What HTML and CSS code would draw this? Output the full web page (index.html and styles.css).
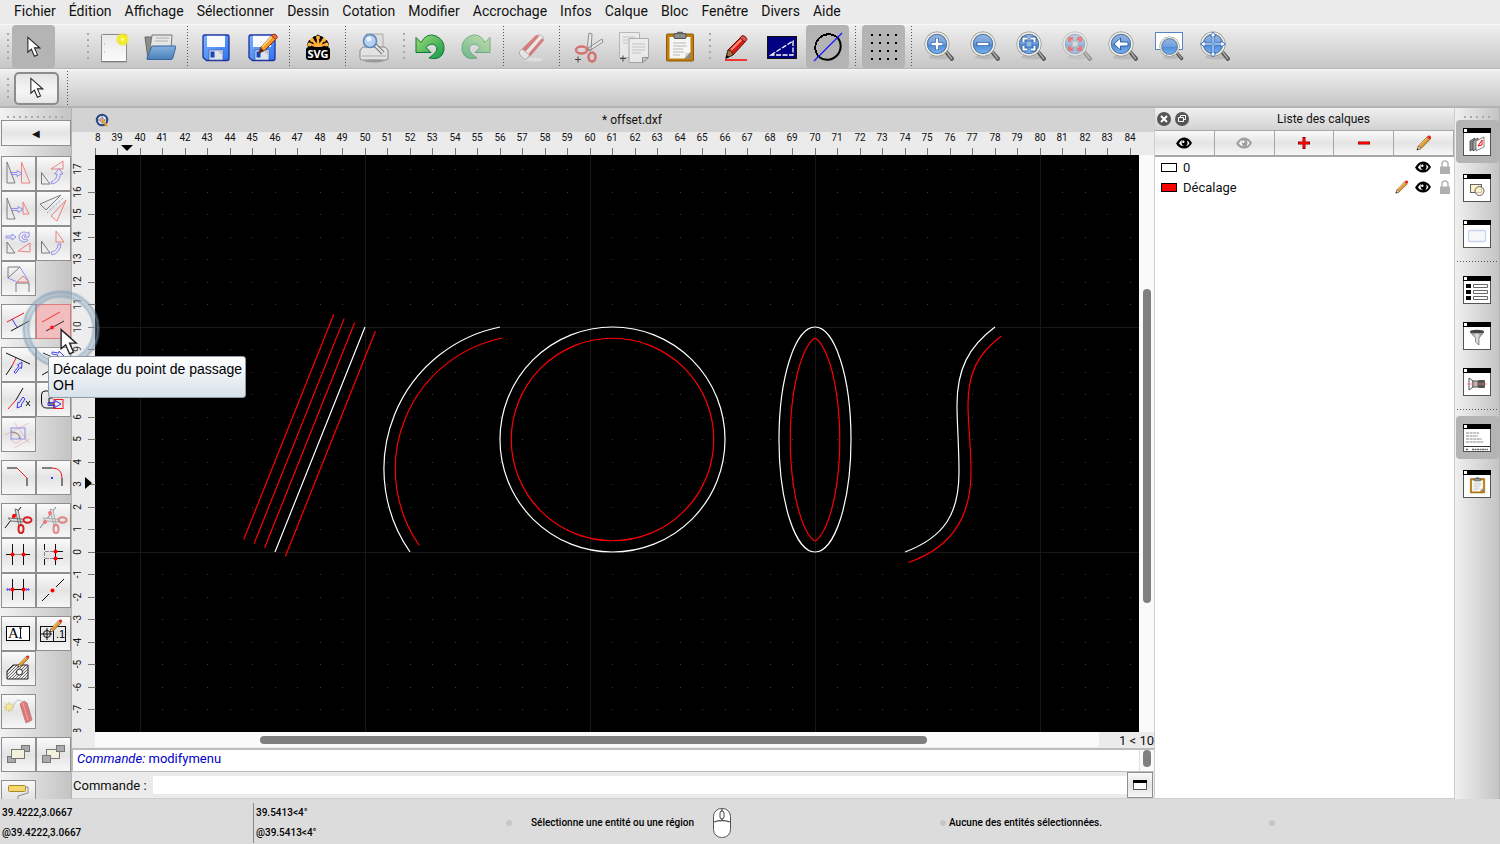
FILE: index.html
```html
<!DOCTYPE html>
<html lang="fr">
<head>
<meta charset="utf-8">
<title>offset.dxf</title>
<link rel="stylesheet" href="styles.css">
</head>
<body>
<svg class="sprite" aria-hidden="true">
  <defs>
    <linearGradient id="lens" x1="0" y1="0" x2="0" y2="1"><stop offset="0" stop-color="#9db9e0"/><stop offset=".5" stop-color="#6f9fdc"/><stop offset=".52" stop-color="#4c8bd8"/><stop offset="1" stop-color="#7db6f0"/></linearGradient>
    <linearGradient id="folder" x1="0" y1="0" x2="0" y2="1"><stop offset="0" stop-color="#86b2de"/><stop offset="1" stop-color="#4a80b8"/></linearGradient>
    <linearGradient id="paper" x1="0" y1="0" x2="0" y2="1"><stop offset="0" stop-color="#e9e9e9"/><stop offset="1" stop-color="#fbfbfb"/></linearGradient>
    <linearGradient id="green" x1="0" y1="0" x2="1" y2="1"><stop offset="0" stop-color="#a5dc78"/><stop offset="1" stop-color="#0f9a48"/></linearGradient>
    <linearGradient id="blue" x1="0" y1="0" x2="1" y2="1"><stop offset="0" stop-color="#7db4ff"/><stop offset="1" stop-color="#2b74f0"/></linearGradient>
    <radialGradient id="glow"><stop offset="0" stop-color="#fffbd0"/><stop offset=".35" stop-color="#f6ee20"/><stop offset=".7" stop-color="#efe63a"/><stop offset="1" stop-color="#efe63a" stop-opacity="0"/></radialGradient>
    <linearGradient id="metal" x1="0" y1="0" x2="1" y2="0"><stop offset="0" stop-color="#777"/><stop offset=".5" stop-color="#e4e4e4"/><stop offset="1" stop-color="#666"/></linearGradient>
    <pattern id="hatch" width="3" height="3" patternUnits="userSpaceOnUse"><path d="M-1 4 4-1M-1 1 1-1M2 4 4 2" stroke="#555" stroke-width=".8"/></pattern>
  </defs>
  <symbol id="lens-base" viewBox="0 0 32 32">
    <ellipse cx="16" cy="26" rx="11" ry="2.500" fill="#000" opacity=".1"/>
    <path d="m19 20 3-2 8 9q0 3-3 3z" fill="#50524c"/><path d="m22 20 6 8" stroke="#aaa" stroke-width="1.500"/>
    <circle cx="13" cy="13" r="11" fill="url(#lens)" stroke="#8f918a" stroke-width="3"/>
    <circle cx="13" cy="13" r="11" fill="none" stroke="#f0f0e8" stroke-width="1.600"/>
    <circle cx="13" cy="13" r="9.600" fill="none" stroke="#446fae" stroke-width=".8"/>
  </symbol>
  <symbol id="pencil" viewBox="0 0 16 16">
    <path d="M1 15 2.500 11 11 2 14 4.500 5 13.500z" fill="#dd9b35" stroke="#6b4315" stroke-width=".7"/>
    <path d="m3.500 10.500 8-8" stroke="#ffd98a" stroke-width=".8"/><path d="m11 2 1-1.200q2-.8 3 1.200v1.200l-1.200 1.200z" fill="#e8211b"/>
    <path d="m1 15 1.500-4 2.500 2.500z" fill="#f1dfb8" stroke="#6b4315" stroke-width=".5"/><path d="m1 15 .6-1.800 1.200 1z" fill="#222"/>
  </symbol>
  <symbol id="eye" viewBox="0 0 16 12">
    <path d="M0 6.500Q4-.5 9 .5q4.500.8 7 5.500-3 5.500-8 5.500Q3 11.500 0 6.500z" fill="currentColor"/>
    <path d="M3 6.500q1-2.500 3-3.500-1.500 5 2 6-3 .3-5-2.500zM11 3.500q2 1 2.500 2.500-1 2.500-3.500 3.200 2.500-2.200 1-5.700z" fill="#fff"/><circle cx="7.300" cy="4.800" r="1.200" fill="#fff"/>
  </symbol>
  <symbol id="lock" viewBox="0 0 12 14"><path d="M3 7V4q0-3 3-3t3 3v3" fill="none" stroke="#b8b8b8" stroke-width="1.500"/><rect x="1" y="6.500" width="10" height="7.500" fill="#b0b0b0"/></symbol>
  <symbol id="floppy" viewBox="0 0 32 32">
    <path d="M4.500 4h23q1.500 0 1.500 1.500v22q0 2-2 2H6.500L3 26.500v-21Q3 4 4.500 4z" fill="url(#blue)" stroke="#20309c" stroke-width="1.300"/>
    <rect x="7" y="4.800" width="18" height="11.200" fill="#f7faff"/><rect x="9" y="19" width="14" height="10" fill="#dfe2ea" stroke="#3459b4" stroke-width=".7"/><rect x="10.500" y="20.500" width="4" height="6" fill="#1746b8"/><path d="m17 19 6 6v-6z" fill="#b9bfd0"/>
  </symbol>
  <symbol id="clip" viewBox="0 0 32 32">
    <rect x="2.500" y="3" width="27" height="27" rx="1" fill="#c17d11" stroke="#8f5902"/><path d="M5.500 6h21v15l-6 6.500h-15z" fill="#f6f6f4"/><path d="M26.500 21v6.500h-6z" fill="#8a8c87"/><path d="m20.500 27.500 1-5.500 5-1z" fill="#d8d8d4"/>
    <rect x="10" y="2.500" width="12" height="5" rx="1" fill="#8d8f8a" stroke="#4f514c"/><rect x="13" y=".8" width="6" height="2.500" fill="#666"/>
    <path d="M9 12h13M9 15h14M9 18h10M9 21h11M9 24h7" stroke="#b8b8b5" stroke-width="1"/>
  </symbol>
  <symbol id="scissors" viewBox="0 0 35 35">
    <path d="M14 6l3 1 3 14-2 2zM7 15l14 1 2 1-1 2-12-1z" fill="#ddd" stroke="#666" stroke-width=".9"/>
    <ellipse cx="26.500" cy="17" rx="4" ry="2.700" fill="none" stroke="#d42020" stroke-width="2"/><ellipse cx="20" cy="26" rx="2.500" ry="4" fill="none" stroke="#d42020" stroke-width="2"/>
  </symbol>
  <symbol id="dockwin" viewBox="0 0 28 28"><rect x=".5" y=".5" width="27" height="27" fill="#fff" stroke="#555"/><path d="M0 0h28v5H0z"/><rect x="1" y="1" width="3" height="3" fill="#fff"/></symbol>
  <symbol id="arrow" viewBox="0 0 16 24"><path d="M1 1v17l4-3.500 3.500 8 3.500-1.500-3.500-8h6z" fill="#fff" stroke="#222" stroke-width="1.200"/></symbol>
</svg>

<nav class="menubar">
  <button>Fichier</button><button>Édition</button><button>Affichage</button><button>Sélectionner</button><button>Dessin</button><button>Cotation</button><button>Modifier</button><button>Accrochage</button><button>Infos</button><button>Calque</button><button>Bloc</button><button>Fenêtre</button><button>Divers</button><button>Aide</button>
</nav>

<div class="toolbar">
  <span class="grip"></span>
  <button class="tool on" aria-label="Sélection"><svg class="cursor"><use href="#arrow"/></svg></button>
  <span class="grip spaced"></span>
  <button class="tool" aria-label="Nouveau"><svg viewBox="0 0 32 32"><rect x="3.500" y="3.500" width="25" height="27" rx="1" fill="url(#paper)" stroke="#888"/><path d="M3 30.800h26" stroke="#777"/><path d="M6 13h1M6 21h1" stroke="#aaa"/><circle cx="24.500" cy="8.500" r="7" fill="url(#glow)"/></svg></button>
  <button class="tool" aria-label="Ouvrir"><svg viewBox="0 0 32 32"><path d="M1 6h6l2 3v18l-5 1z" fill="#8b8d88" stroke="#666"/><path d="M8 4h20l-1 14H6z" fill="#e6e6e4" stroke="#777"/><path d="M12 7h13M11 10h13" stroke="#b0b0b0"/><path d="M8 15h23q1 0 .8 1l-3 11q-.4 1.500-2 1.500H4q-1.500 0-1-1.500z" fill="url(#folder)" stroke="#3465a4"/></svg></button>
  <span class="sep"></span>
  <button class="tool" aria-label="Enregistrer"><svg><use href="#floppy"/></svg></button>
  <button class="tool" aria-label="Enregistrer sous"><svg viewBox="0 0 32 32"><use href="#floppy" width="32" height="32"/><path d="m13 22 2-6L26.500 4l4 3.500-12 12z" fill="#f59a22" stroke="#7a2413"/><path d="m16 16 11-11.500" stroke="#ffe08a" stroke-width="1.500"/><path d="m25.500 5 2-2q3 0 4 3.500l-2 2z" fill="#e5782c" stroke="#a22"/><path d="m13 22 1.800-5.200 3.200 3z" fill="#602a1c"/></svg></button>
  <span class="sep"></span>
  <button class="tool" aria-label="Exporter SVG"><svg viewBox="0 0 32 32"><path d="M7 17Q4 14 6 11q1-3 4-2 0-4 4-4 2-3 4 0 4 0 4 4 3-1 4 2 2 3-1 6z"/><g stroke="#ffb13b" stroke-width="2.400" stroke-linecap="round"><path d="M16 16V6.500M16 16l-5.500-7M16 16l5.500-7M16 16l-8-3M16 16l8-3"/></g><g fill="#ffb13b"><circle cx="16" cy="6.500" r="2"/><circle cx="10" cy="9" r="2"/><circle cx="22" cy="9" r="2"/><circle cx="7.500" cy="13.500" r="2"/><circle cx="24.500" cy="13.500" r="2"/></g><rect x="4" y="16" width="24" height="13" rx="3"/><text class="svg-word" x="16" y="27" text-anchor="middle">SVG</text></svg></button>
  <span class="sep"></span>
  <button class="tool" aria-label="Aperçu"><svg viewBox="0 0 32 32"><path d="M8 3h17v15H8z" fill="#ddd" stroke="#aaa"/><path d="m5 16-3 3v8q0 2 2 2h24q2 0 2-2v-8l-3-3z" fill="#e2e2e0" stroke="#888"/><path d="M4 25h24" stroke="#aaa"/><ellipse cx="16" cy="30" rx="10" ry="1.500" fill="#999"/><path d="m17 14 8 8" stroke="#777" stroke-width="4"/><path d="m17 14 8 8" stroke="#e6e6e6" stroke-width="2"/><circle cx="12" cy="10" r="6.500" fill="#b6d1ee" stroke="#5c88bd" stroke-width="1.600"/><circle cx="11" cy="8" r="2.500" fill="#e9f3ff"/></svg></button>
  <span class="grip"></span>
  <button class="tool" aria-label="Annuler"><svg viewBox="0 0 32 32"><path id="undo" d="M2 6.500v15h15l-5-5q4-5 9-2.500 6 5-6 13 13 3 15-8 1-10-8-14Q13 1 7 11.500z" fill="url(#green)" stroke="#0b7a37"/></svg></button>
  <button class="tool dim" aria-label="Rétablir"><svg viewBox="0 0 32 32"><use href="#undo" transform="matrix(-1 0 0 1 32 0)"/></svg></button>
  <span class="sep"></span>
  <button class="tool dim" aria-label="Effacer"><svg viewBox="0 0 32 32"><ellipse cx="17" cy="28.500" rx="10" ry="2" fill="#eee"/><path d="m3 21 18-17q5-1 7 4L11 27z" fill="#f4f4f2" stroke="#888"/><path d="m6 18 14-14 3.500 1L9.500 20.500zM12 23.500 26 7l2 2.500-14 16z" fill="#d22020"/><path d="m3 21 3-3 7.500 6-3 4.500q-6-1-7.500-7.500z" fill="#f8f4f4" stroke="#888"/></svg></button>
  <span class="sep"></span>
  <button class="tool" aria-label="Couper"><svg viewBox="0 0 32 32"><g opacity=".6"><path d="m17 2 3 1-1 16-4-1zM16 17l14-9 1 3-14 9z" fill="#eee" stroke="#555"/><ellipse cx="9.500" cy="19" rx="5.500" ry="3.500" fill="none" stroke="#d63030" stroke-width="2.500"/><ellipse cx="20" cy="26" rx="3.500" ry="4.500" fill="none" stroke="#d63030" stroke-width="2.500"/></g><path d="M3 28.500h6M6 25.500v6" stroke="#444"/></svg></button>
  <button class="tool" aria-label="Copier"><svg viewBox="0 0 32 32"><g opacity=".75"><path d="M1.500 1.500h20v25h-20z" fill="#eee" stroke="#aaa"/><path d="M5 6h12M5 9h12M5 12h5" stroke="#bbb"/><path d="M11 7.500h19.500v19l-6 5H11z" fill="#f1f1f1" stroke="#999"/><path d="M14 13h13M14 16h13M14 19h13M14 22h9" stroke="#bbb"/><path d="M30.500 26.500h-6v5z" fill="#ccc" stroke="#777"/></g><path d="M2 27.500h6M5 24.500v6" stroke="#444"/></svg></button>
  <button class="tool" aria-label="Coller"><svg><use href="#clip"/></svg></button>
  <span class="grip"></span>
  <button class="tool" aria-label="Crayon"><svg viewBox="0 0 32 32"><path d="m6 27 2-8L20 7l5 4-12 13z" fill="#d81e14" stroke="#5b0f0c"/><path d="m11 19 11-11" stroke="#ff8b7a" stroke-width="2"/><path d="m20 7 2-2.500q4 0 5 4l-2 2.500z" fill="#df5050" stroke="#7b1a15"/><path d="m6 27 2-8 3 1 2 4z" fill="#a87838" stroke="#333"/><path d="m5.500 28 1-4 3 2z"/><path d="M5 29h22" stroke="red" stroke-width="1.500"/></svg></button>
  <button class="tool" aria-label="Brouillon"><svg viewBox="0 0 32 32"><rect x="1.500" y="5.500" width="29" height="22" fill="#000080" stroke="#111"/><path d="M5 24 27 10V24z" fill="none" stroke="#fff" stroke-width="1.300" stroke-dasharray="5 1.500"/></svg></button>
  <button class="tool on" aria-label="Antialias"><svg viewBox="0 0 32 32"><path d="M25 6A13.500 13.500 0 0 1 7 26" fill="none" stroke="#000" stroke-width="2"/><path d="M25 6A13.500 13.500 0 0 0 7 26" fill="none" stroke="#000" stroke-width="2" shape-rendering="crispEdges"/><path d="M2 30 30 2" stroke="#1818ff" stroke-width="1.300"/></svg></button>
  <span class="sep"></span>
  <button class="tool on" aria-label="Grille"><svg viewBox="0 0 32 32"><path d="M3 4h26M3 12h26M3 20h26M3 28h26" stroke="#000" stroke-width="2" stroke-dasharray="2 6"/></svg></button>
  <span class="sep"></span>
  <button class="tool" aria-label="Zoom avant"><svg viewBox="0 0 32 32"><use href="#lens-base" width="32" height="32"/><path d="M7 13h12M13 7v12" stroke="#315f9f" stroke-width="4"/><path d="M7.500 13h11M13 7.500v11" stroke="#fff" stroke-width="2.400"/></svg></button>
  <button class="tool" aria-label="Zoom arrière"><svg viewBox="0 0 32 32"><use href="#lens-base" width="32" height="32"/><path d="M6.500 13h13" stroke="#315f9f" stroke-width="4"/><path d="M7.500 13h11" stroke="#fff" stroke-width="2.400"/></svg></button>
  <button class="tool" aria-label="Zoom auto"><svg viewBox="0 0 32 32"><use href="#lens-base" width="32" height="32"/><g fill="none"><path d="M11 7.500H7.500V11M15 7.500h3.500V11M11 18.500H7.500V15M15 18.500h3.500V15" stroke="#315f9f" stroke-width="4"/><path d="M11 7.500H7.500V11M15 7.500h3.500V11M11 18.500H7.500V15M15 18.500h3.500V15" stroke="#fff" stroke-width="2"/><rect x="10" y="10" width="6" height="6" fill="#8fb7e8" stroke="#4475b5"/></g></svg></button>
  <button class="tool dim" aria-label="Zoom sur la sélection"><svg viewBox="0 0 32 32"><use href="#lens-base" width="32" height="32"/><path d="M11 7.500H7.500V11M15 7.500h3.500V11M11 18.500H7.500V15M15 18.500h3.500V15" fill="none" stroke="#f02020" stroke-width="3"/><rect x="10" y="10" width="6" height="6" fill="#cbd8ea" stroke="#888"/></svg></button>
  <button class="tool" aria-label="Vue précédente"><svg viewBox="0 0 32 32"><use href="#lens-base" width="32" height="32"/><path d="m6 13 6.500-6v4H20v4h-7.500v4z" fill="#fff" stroke="#315f9f"/></svg></button>
  <button class="tool" aria-label="Zoom fenêtre"><svg viewBox="0 0 32 32"><rect x="1.500" y="1.500" width="27" height="17" fill="#fff" stroke="#5883c4"/><use href="#lens-base" x="5" y="5" width="26" height="26"/></svg></button>
  <button class="tool" aria-label="Panoramique"><svg viewBox="0 0 32 32"><use href="#lens-base" width="32" height="32"/><path d="m13 1 3 4h-2v7H21v-2l4.500 3-4.500 3v-2h-7v8h2L13 26l-3-4h2v-8H5v2L.5 13 5 10v2h7V5h-2z" fill="#fff" stroke="#3a72c0"/><rect x="11" y="11" width="4" height="4" fill="#79a8e0"/></svg></button>
</div>

<div class="toolbar options">
  <span class="grip"></span>
  <button class="option" aria-label="Sélection"><svg class="cursor"><use href="#arrow"/></svg></button>
  <span class="sep"></span>
</div>

<main class="work">
  <aside class="cad-tools">
    <span class="grip-h"></span>
    <button class="back" aria-label="Retour">◀</button>
    <div class="group">
      <button class="cad dim" aria-label="Déplacer"><svg><path class="k" d="M6 6v21h8z"/><path class="r" d="M20.500 6v21H29z"/><path class="b" d="M9 16.500h7v-2l5 3-5 3v-2h-6"/></svg></button>
      <button class="cad dim" aria-label="Tourner"><svg><path class="k" d="M5.500 16.500v11.500H14z"/><path class="r" d="M15 13 27 5v8z"/><path class="b" d="M15 26q6-2 6-8h-2.500l4.500-5.500 4 5.500h-2.500q-1 9-9 10z"/></svg></button>
      <button class="cad dim" aria-label="Échelle"><svg><path class="k" d="M6 7v21h8z"/><path class="r" d="M22 11v12h6z"/><path class="b" d="M10 17.500h7v-2l5 3-5 3v-2h-6"/></svg></button>
      <button class="cad dim" aria-label="Miroir"><svg><path class="k" d="M4 13 25 4 10 19z"/><path class="r" d="M15 25 30 9l-9 21z"/><path class="b" stroke-dasharray="2 2" d="M11 22 28 6"/></svg></button>
      <button class="cad dim" aria-label="Déplacer et tourner"><svg><path class="k" d="M6 16v11h8z"/><path class="r" d="m17 25 12-8v9z"/><path class="b" d="M5 10h6V8l4 3-4 3v-2H5zM27 14a5 5 0 1 1-1-7l2-1v5h-5l2-2a2.500 2.500 0 1 0 0 4z"/></svg></button>
      <button class="cad dim" aria-label="Tourner deux fois"><svg><path class="k" d="M5.500 15v12H14z"/><path class="r" d="M20 5v11h8z"/><path class="b" d="M15 26q7-1 7-8h3q-1 9-9 11z"/></svg></button>
      <button class="cad dim" aria-label="Étirer"><svg><path class="k" d="M7 17V6h12zM15 31v-9h13v9"/><path class="b" d="m19 6 9 15M7 17l9 4"/><path class="r" d="m22 15-6 6h12z"/></svg></button>
    </div>
    <div class="group">
      <button class="cad" aria-label="Décalage"><svg><path class="r" d="M6 18 23 9"/><path class="k" d="m10 27 18-10"/><path class="b" d="m11 15 5 8"/></svg></button>
      <button class="cad hot" aria-label="Décalage du point de passage"><svg><path class="r" d="M6 18 24 8"/><path class="k" d="m10 27 18-10"/><circle cx="16" cy="23.500" r="2" fill="red"/></svg></button>
    </div>
    <div class="group">
      <button class="cad" aria-label="Ajuster"><svg><path class="k" d="m5 6 24 11M11 19 5 28"/><path class="r" d="m15 11-4 8"/><path class="b" d="m13 25 5-6-1.500-1L21 15l-.5 6.500-1.500-1-4.500 6z"/></svg></button>
      <button class="cad" aria-label="Ajuster deux"><svg><path class="k" d="m7 6 9 4M6 28l7-4"/><path class="b" d="m16 5 7 1v-2l5 5-7 1 1-2-6-1z"/></svg></button>
      <button class="cad" aria-label="Allonger"><svg><path class="k" d="m22 6-7 12M25 19l4 5M29 19l-4 5"/><path class="r" d="M15 18 7 27"/><path class="b" d="m22 15-4 6-1-1-1 6 5-2-1-1 4-6z"/></svg></button>
      <button class="cad" aria-label="Étirer la sélection"><svg><path class="k" d="M18 9H9q-3.500 0-3.500 4v7q0 6 5 6H18v-4h-5v-6h4"/><rect class="r" x="18" y="17.500" width="9" height="9"/><path class="b" d="M12 20.500h7v-2l6 3.500-6 3.500v-2h-7z"/></svg></button>
      <button class="cad dim" aria-label="Accrocher"><svg><path class="r" opacity=".4" d="m4 18 24-12M13 5l15 21M13 31l16-9"/><circle class="r" opacity=".4" cx="15" cy="21" r="5"/><rect class="b" x="10" y="11" width="14" height="11"/><path class="k" d="M10 15q8 0 9 7"/></svg></button>
    </div>
    <div class="group">
      <button class="cad" aria-label="Chanfrein"><svg><path class="k" d="M6 8h10M26 18v8"/><path class="r" d="m16 8 10 10"/></svg></button>
      <button class="cad" aria-label="Arrondi"><svg><path class="k" d="M6 8h10M26 18v8"/><path class="r" d="M16 8q10 0 10 10"/><circle cx="16" cy="18" r="1" fill="#00f"/></svg></button>
    </div>
    <div class="group">
      <button class="cad" aria-label="Couper"><svg><path class="k" d="M4 25 20 4"/><use href="#scissors" width="35" height="35"/><circle cx="13" cy="13" r="2" fill="red"/></svg></button>
      <button class="cad dim" aria-label="Couper deux"><svg><path class="k" d="M4 25 20 4"/><use href="#scissors" width="35" height="35"/><circle cx="14" cy="10" r="2" fill="red"/><circle cx="9" cy="19" r="2" fill="red"/></svg></button>
      <button class="cad" aria-label="Joindre"><svg><path class="g" d="M11 16.500h12"/><path class="k" d="M11.500 6v21M22.500 6v21M5 16.500h6M23 16.500h6"/><circle cx="11.500" cy="16.500" r="2" fill="red"/><circle cx="22.500" cy="16.500" r="2" fill="red"/></svg></button>
      <button class="cad" aria-label="Interrompre"><svg><path class="g" stroke-dasharray="4 1" d="M9 13.500h10M9 20.500h10M8.500 14v6"/><path class="k" d="M8.500 6v6M8.500 21v6M19.500 6v21M20 13.500h7M20 20.500h7"/><circle cx="19.500" cy="13.500" r="2" fill="red"/><circle cx="19.500" cy="20.500" r="2" fill="red"/></svg></button>
      <button class="cad" aria-label="Segment"><svg><path class="k" d="M11.500 6v21M22.500 6v21M11 16.500h12"/><path class="b" opacity=".7" d="M5 16.500h6M23 16.500h6M6 15l3 3M9 15l-3 3M25 15l3 3M28 15l-3 3"/><circle cx="11.500" cy="16.500" r="2" fill="red"/><circle cx="22.500" cy="16.500" r="2" fill="red"/></svg></button>
      <button class="cad" aria-label="Point de coupe"><svg><path class="k" d="m6 28 7-7M20 14l8-8"/><circle cx="16.500" cy="17.500" r="2" fill="red"/></svg></button>
    </div>
    <div class="group">
      <button class="cad" aria-label="Modifier le texte"><svg><rect x="5.500" y="10.500" width="23" height="14" fill="#fff" stroke="#000"/><text class="serif" x="7" y="22">A</text><path class="k" d="M19.500 12v10M18 12h3M18 22h3"/></svg></button>
      <button class="cad" aria-label="Modifier la cote"><svg><rect class="k" x="4.500" y="10.500" width="25" height="15"/><path class="k" d="M17.500 10v16M5 18h11M11 12v12"/><circle class="k" cx="11" cy="18" r="3.500"/><text class="mini" x="20" y="22">.1</text><use href="#pencil" x="13" y="3" width="14" height="14"/></svg></button>
      <button class="cad" aria-label="Modifier la hachure"><svg><path d="M6 28v-8l6-6h15v14z" fill="url(#hatch)" stroke="#222"/><circle cx="18.500" cy="21" r="3" fill="#fff" stroke="#222"/><use href="#pencil" x="16" y="4" width="13" height="13"/></svg></button>
    </div>
    <div class="group">
      <button class="cad dim" aria-label="Exploser"><svg><path d="m19 10 4-3 3 2 5 17-6 3z" fill="#d60a0a" stroke="#8e1a1a"/><path d="m22 9 5 17" stroke="#ff6060"/><path class="g" d="M21 8q-5-6-9 5"/><path d="M8 8v10M3 13h10M4.500 9.500l7 7M11.500 9.500l-7 7" stroke="#c8a800" stroke-width="1.300"/><circle cx="8" cy="13" r="2.500" fill="#ffe640"/></svg></button>
    </div>
    <div class="group">
      <button class="cad" aria-label="Premier plan"><svg><g fill="#aaa" stroke="#777"><rect x="20.500" y="8.500" width="8" height="6"/><rect x="6.500" y="19.500" width="8" height="6"/></g><rect x="10.500" y="12.500" width="13" height="9" fill="#f3f1dc" stroke="#777"/></svg></button>
      <button class="cad" aria-label="Arrière-plan"><svg><rect x="10.500" y="12.500" width="13" height="9" fill="#f3f1dc" stroke="#777"/><g fill="#aaa" stroke="#777"><rect x="20.500" y="8.500" width="8" height="6"/><rect x="6.500" y="18.500" width="8" height="7"/></g></svg></button>
    </div>
    <div class="group">
      <button class="cad" aria-label="Propriétés"><svg><path class="g" d="M25 7h2v6l-10 3v4"/><rect x="7.500" y="5.500" width="17" height="6" rx="1" fill="#f5d76c" stroke="#a98a28"/></svg></button>
    </div>
  </aside>

  <section class="document">
    <header class="doc-title">
      <svg class="doc-icon" viewBox="0 0 16 16"><circle cx="7.500" cy="7.500" r="5.500" fill="#fff" stroke="#2c4c8c" stroke-width="2.400"/><path d="M3 7.500h9M7.500 3v9" stroke="#b55" stroke-width=".8"/><circle cx="7.500" cy="7.500" r="2.500" fill="none" stroke="#555" stroke-width=".7"/><path d="m8 8 5 6" stroke="#e9a21f" stroke-width="2.400"/></svg>
      <h1>* offset.dxf</h1>
    </header>
    <div class="viewport">
      <span class="corner"></span>
      <svg class="ruler-x" id="rulerX"></svg>
      <span></span>
      <svg class="ruler-y" id="rulerY"></svg>
      <svg class="canvas">
        <path id="dots" class="dots"/>
        <path id="axes" class="axes"/>
        <g class="ink" transform="translate(-95 -155)">
          <path class="white" d="M275 552 365 327"/>
          <path d="m264.600 547.800 90-225M254.100 543.600l90-225M243.700 539.500l90-225M285.400 556.200l90-225"/>
          <path class="white" d="M500 327A145 145 0 0 0 410 552"/>
          <path d="M502.500 338A133.700 133.700 0 0 0 419.300 545.500"/>
          <circle class="white" cx="612.500" cy="439.500" r="112.500"/><circle cx="612.500" cy="439.500" r="101.250"/>
          <ellipse class="white" cx="815" cy="439.500" rx="36" ry="112.500"/>
          <path id="innerEllipse"/>
          <path class="white" d="M905 552C945 537 959 513 959 472 959 446 957 424 957 405 957 370 968 347 995 327"/>
          <path d="M908.500 562.500C953 547 971 516 971 472 971 446 968 424 968 405 968 374 977 354 1001.500 336"/>
        </g>
      </svg>
      <div class="scroll-y"><span></span></div>
      <span class="corner"></span>
      <div class="scroll-x"><span></span></div>
      <output class="grid-size">1 &lt; 10</output>
    </div>
    <div class="history"><p><em>Commande:</em> modifymenu</p><span class="history-scroll"><i></i></span></div>
    <div class="command">
      <label for="cmd">Commande :</label><input id="cmd" type="text">
      <button aria-label="Détacher"><svg viewBox="0 0 14 10"><rect x=".5" y=".5" width="13" height="9" fill="#fff" stroke="#555"/><path d="M0 0h14v3H0z"/></svg></button>
    </div>
  </section>

  <aside class="layers">
    <header>
      <button aria-label="Fermer"><svg viewBox="0 0 14 14"><circle cx="7" cy="7" r="7" fill="#555"/><path d="m4 4 6 6M10 4l-6 6" stroke="#fff" stroke-width="2"/></svg></button>
      <button aria-label="Détacher"><svg viewBox="0 0 14 14"><circle cx="7" cy="7" r="7" fill="#555"/><path d="M5.500 5.500v-2h5v4h-2M3.500 5.500h5v4h-5z" fill="none" stroke="#fff"/></svg></button>
      <h2>Liste des calques</h2>
    </header>
    <div class="layer-tools">
      <button aria-label="Tout afficher"><svg class="i-eye"><use href="#eye"/></svg></button>
      <button aria-label="Tout masquer"><svg class="i-eye faded"><use href="#eye"/></svg></button>
      <button aria-label="Ajouter"><svg class="i-sign" viewBox="0 0 12 12"><path d="M4.500 0h3v4.500H12v3H7.500V12h-3V7.500H0v-3h4.500z" fill="#800"/><path d="M5 1h2v4h4v2H7v4H5V7H1V5h4z" fill="red"/></svg></button>
      <button aria-label="Supprimer"><svg class="i-sign" viewBox="0 0 12 12"><path d="M0 4.500h12v3H0z" fill="#800"/><path d="M.5 5h11v2H.5z" fill="red"/></svg></button>
      <button aria-label="Modifier"><svg class="i-pen"><use href="#pencil"/></svg></button>
    </div>
    <ul>
      <li><i class="swatch"></i><span>0</span><svg class="i-eye"><use href="#eye"/></svg><svg class="i-lock"><use href="#lock"/></svg></li>
      <li><i class="swatch red"></i><span>Décalage</span><svg class="i-pen small"><use href="#pencil"/></svg><svg class="i-eye"><use href="#eye"/></svg><svg class="i-lock"><use href="#lock"/></svg></li>
    </ul>
  </aside>

  <aside class="docks">
    <span class="grip-h"></span>
    <button class="tool on" aria-label="Calques"><svg viewBox="0 0 28 28"><use href="#dockwin" width="28" height="28"/><path d="m7 13 5-3v10l-5 3z" fill="#888" stroke="#444" stroke-width=".8"/><path d="m10 13 5-3v10l-5 3z" fill="#aaa" stroke="#444" stroke-width=".8"/><path d="m13 13 8-4v10l-8 4z" fill="#fff" stroke="#666" stroke-width=".8"/><path d="m15 18 4-6v5z" fill="none" stroke="red"/></svg></button>
    <button class="tool" aria-label="Blocs"><svg viewBox="0 0 28 28"><use href="#dockwin" width="28" height="28"/><rect x="7.500" y="10.500" width="11" height="8" fill="#fff0cc" stroke="#666"/><circle cx="16.500" cy="17" r="4.500" fill="#fff0cc" fill-opacity=".7" stroke="#666"/></svg></button>
    <button class="tool" aria-label="Vues"><svg viewBox="0 0 28 28"><use href="#dockwin" width="28" height="28"/><rect x="5.500" y="10.500" width="17" height="11" rx="2" fill="#f8f8f8" stroke="#c4d6ee" stroke-width="1.300"/></svg></button>
    <span class="sep-h"></span>
    <button class="tool" aria-label="Propriétés"><svg viewBox="0 0 28 28"><use href="#dockwin" width="28" height="28"/><path d="M3 8h5v4H3zM3 14h5v4H3zM3 20h5v4H3z"/><path d="M10.500 8.500h14v3h-14zM10.500 14.500h14v3h-14zM10.500 20.500h14v3h-14z" fill="#fff" stroke="#666"/></svg></button>
    <button class="tool" aria-label="Filtre"><svg viewBox="0 0 28 28"><use href="#dockwin" width="28" height="28"/><path d="m7 10 5.500 6v4l3.500 3v-7l5-6z" fill="url(#metal)" stroke="#555" stroke-width=".6"/><ellipse cx="14" cy="9.500" rx="7" ry="1.800" fill="#444"/></svg></button>
    <button class="tool" aria-label="Outils"><svg viewBox="0 0 28 28"><use href="#dockwin" width="28" height="28"/><path d="m6 10 4 3v6l-4 3z" fill="#fff" stroke="#555"/><rect x="10" y="13" width="5" height="6" fill="#bbb" stroke="#555"/><rect x="15" y="12" width="7" height="8" rx="1" fill="#555"/><path d="M4 16h20" stroke="#f88" stroke-dasharray="2 1"/></svg></button>
    <span class="sep-h"></span>
    <button class="tool on" aria-label="Ligne de commande"><svg viewBox="0 0 28 28"><use href="#dockwin" width="28" height="28"/><path d="M3 9h13M3 12h12M3 15h16M3 18h17" stroke="#888" stroke-width="1.200" stroke-dasharray="3 .6"/><path d="M1 22.500h26" stroke="#333"/><path d="M3 25.500h2M9 25.500h16" stroke="#666" stroke-width="1.500" stroke-dasharray="2 .5"/></svg></button>
    <button class="tool" aria-label="Presse-papiers"><svg viewBox="0 0 28 28"><use href="#dockwin" width="28" height="28"/><use href="#clip" x="6" y="7" width="17" height="17"/></svg></button>
  </aside>

  <svg class="halo" viewBox="0 0 80 80" aria-hidden="true"><circle cx="40" cy="40" r="35" fill="#fff" fill-opacity=".12"/><g fill="none" stroke="#7c9ab5"><circle cx="40" cy="40" r="35" stroke-width="8" opacity=".35"/><circle cx="40" cy="40" r="37" stroke-width="1.500" opacity=".4"/><circle cx="40" cy="40" r="33" stroke-width="1.500" opacity=".3"/></g></svg>
  <div class="tooltip" role="tooltip">Décalage du point de passage<br>OH</div>
  <svg class="pointer" aria-hidden="true"><use href="#arrow"/></svg>
</main>

<footer class="status">
  <div class="coords"><span>39.4222,3.0667</span><span>@39.4222,3.0667</span></div>
  <div class="coords polar"><span>39.5413&lt;4°</span><span>@39.5413&lt;4°</span></div>
  <div class="hint"><i class="dot"></i><span>Sélectionne une entité ou une région</span>
    <svg class="mouse" viewBox="0 0 18 30"><rect x=".5" y=".5" width="17" height="29" rx="8" fill="#fff" stroke="#555"/><path d="M1 14q8-3 16 0M9 0v12" fill="none" stroke="#555" stroke-width="1.300"/><rect x="7" y="3" width="4" height="8" rx="2" fill="#fff" stroke="#444"/></svg></div>
  <div class="selection"><i class="dot"></i><span>Aucune des entités sélectionnées.</span></div>
  <div class="last"><i class="dot"></i></div>
</footer>
<script src="rulers.js"></script>
</body>
</html>
```
FILE: styles.css
```css
* { box-sizing: border-box; }
body { margin: 0; height: 100vh; display: flex; flex-direction: column; overflow: hidden; background: #ececec; color: #111; font-family: Roboto, "Liberation Sans", sans-serif; font-size: 13px; }
button { font: inherit; color: inherit; margin: 0; padding: 0; border: 0; background: none; }
svg { display: block; flex: none; }
h1, h2, p, ul { margin: 0; padding: 0; font-weight: 400; }
.sprite { position: absolute; width: 0; height: 0; }

.menubar { display: flex; gap: 13px; height: 24px; padding: 0 14px 2px; align-items: center; font-size: 14px; background: #ebebeb; }
.menubar button { line-height: 22px; white-space: nowrap; }

.toolbar { display: flex; gap: 3px; align-items: center; height: 45px; flex: none; padding-left: 2px; background: linear-gradient(#efefef, #c6c6c6); border-top: 1px solid #f8f8f8; border-bottom: 1px solid #b4b4b4; }
.options { height: 39px; border-bottom-width: 2px; }
.tool { width: 43px; height: 43px; flex: none; display: grid; place-items: center; border-radius: 4px; }
.tool svg { width: 32px; height: 32px; }
.tool.on { background: #b4b4b4; }
.dim svg { opacity: .5; }
.toolbar .cursor { width: 14px; height: 22px; }
.grip { width: 7px; height: 27px; flex: none; background: repeating-linear-gradient(#a8a8a8 0 2px, transparent 2px 6px) 5px 0 / 2px 100% no-repeat; }
.options .grip { height: 21px; }
.spaced { margin-left: 24px; }
.sep { width: 7px; height: 41px; flex: none; background: repeating-linear-gradient(#555 0 1px, transparent 1px 3px) 3px 0 / 1px 100% no-repeat; }
.options .sep { height: 34px; margin-left: 2px; }
.option { width: 45px; height: 33px; margin-left: 2px; display: grid; place-items: center; border: 2px solid #8c8c8c; border-radius: 5px; background: linear-gradient(#e4e4e4, #f6f6f6 60%, #e6e6e6); }
.svg-word { font: 700 11px "Open Sans", sans-serif; fill: #fff; }

.work { position: relative; flex: 1; min-height: 0; display: flex; }
.cad-tools { width: 72px; flex: none; overflow: hidden; padding: 7px 0 0 1px; background: linear-gradient(90deg, #f2f2f2, #c4c4c4); border-right: 1px solid #b4b4b4; }
.grip-h { display: block; width: 57px; height: 3px; margin: 0 0 2px 6px; background: repeating-linear-gradient(90deg, #a8a8a8 0 2px, transparent 2px 6px) 0 1px / 100% 2px no-repeat; }
.back, .cad, .layer-tools button, .command button { border: 1px solid #8f8f8f; background: linear-gradient(#fafafa, #e4e4e4 50%, #f6f6f6); }
.back { display: block; width: 70px; height: 26px; margin-bottom: 10px; font-size: 10px; }
.group { display: grid; grid-template-columns: 35px 35px; margin-bottom: 8px; }
.cad { height: 35px; overflow: hidden; }
.cad svg { width: 35px; height: 35px; margin: -1px; fill: none; }
.cad.hot { background: #f1b4b7; border-color: #d9686c; }
.k { stroke: #111; fill: none; }
.r { stroke: #f01818; fill: none; }
.b { stroke: #3838f0; fill: none; }
.g { stroke: #888; fill: none; }
.serif { font: 15px "Liberation Serif", serif; fill: #000; }
.mini { font: 11px "Liberation Sans", sans-serif; fill: #000; }

.document { flex: 1; min-width: 0; display: flex; flex-direction: column; }
.doc-title { display: flex; align-items: center; height: 24px; flex: none; padding-left: 23px; background: #d3d3d3; }
.doc-title h1 { flex: 1; text-align: center; font-size: 12px; }
.doc-icon { width: 15px; height: 15px; }
.viewport { flex: 1; min-height: 0; display: grid; grid-template: 23px minmax(0, 1fr) 16px / 23px minmax(0, 1fr) 15px; background: #ebebeb; }
.viewport > svg { width: 100%; height: 100%; overflow: hidden; }
.ruler-x, .ruler-y { font-size: 10px; fill: #111; }
.ruler-x path, .ruler-y path { stroke: #777; }
.canvas { background: #000; }
.dots { stroke: #3c3c3c; shape-rendering: crispEdges; }
.axes { stroke: #181818; shape-rendering: crispEdges; }
.ink { fill: none; stroke: #f00; stroke-width: 1.2; }
.ink .white { stroke: #fff; }
.scroll-y, .scroll-x { background: #fafafa; }
.scroll-y { padding: 0 4px; }
.scroll-y span { display: block; width: 8px; height: 54.4%; margin-top: 134px; border-radius: 4px; background: #7f7f7f; }
.scroll-x { padding: 4px 0; margin: 0 40px 1px 0; }
.scroll-x span { display: block; width: 64%; height: 8px; margin-left: 15.8%; border-radius: 4px; background: #7f7f7f; }
.scroll-x span { width: 66.5%; margin-left: 16.4%; }
.viewport .grid-size { grid-column: 3; justify-self: end; white-space: nowrap; line-height: 17px; }
.history { display: flex; height: 24px; flex: none; background: #fff; border: solid #bcbcbc; border-width: 2px 0 1px 1px; color: #0000c8; line-height: 18px; }
.history p { flex: 1; padding-left: 4px; }
.history-scroll { width: 15px; padding: 0 3px; background: #fafafa; border-left: 1px solid #e0e0e0; }
.history-scroll i { display: block; width: 8px; height: 17px; border-radius: 4px; background: #7f7f7f; }
.command { display: flex; align-items: center; height: 27px; flex: none; padding-right: 1px; background: #ebebeb; border-bottom: 1px solid #cdcdcd; }
.command label { width: 81px; padding-left: 1px; }
.command input { flex: 1; min-width: 0; height: 18px; border: 0; padding: 0 4px; background: #fff; outline: 0; }
.command button { width: 26px; height: 26px; display: grid; place-items: center; }
.command svg { width: 14px; height: 10px; }

.layers { width: 301px; flex: none; background: #fff; border: solid #cdcdcd; border-width: 0 1px 1px; }
.layers header { display: flex; align-items: center; gap: 4px; height: 22px; padding-left: 2px; background: linear-gradient(#f0f0f0, #d2d2d2); }
.layers header svg { width: 14px; height: 14px; }
.layers h2 { flex: 1; text-align: center; font-size: 12px; }
.layer-tools { display: grid; grid-template-columns: repeat(5, 1fr); height: 27px; }
.layer-tools button { display: grid; place-items: center; border-color: #a8a8a8; border-width: 1px 1px 2px 0; }
.layers li { display: flex; align-items: center; gap: 6px; height: 20px; padding: 0 3px 0 6px; list-style: none; }
.layers li span { flex: 1; }
.swatch { width: 16px; height: 9px; border: 1px solid #000; }
.swatch.red { background: red; }
.i-eye { width: 16px; height: 12px; color: #000; }
.i-eye.faded { color: #a0a0a0; }
.i-pen { width: 16px; height: 16px; }
.i-pen.small { width: 14px; height: 14px; }
.i-sign { width: 12px; height: 12px; }
.i-lock { width: 12px; height: 14px; margin-left: 2px; }

.docks { width: 45px; flex: none; display: flex; flex-direction: column; align-items: center; gap: 3px; padding-top: 7px; background: linear-gradient(90deg, #f0f0f0, #c4c4c4); border-right: 1px solid #b4b4b4; }
.docks .grip-h { width: 27px; margin: 0 0 -1px; }
.docks .tool svg { width: 28px; height: 28px; }
.sep-h { width: 41px; height: 7px; background: repeating-linear-gradient(90deg, #555 0 1px, transparent 1px 3px) 0 3px / 100% 1px no-repeat; }

.halo { position: absolute; left: 21px; top: 181px; width: 80px; height: 80px; pointer-events: none; }
.pointer { position: absolute; left: 60px; top: 220px; width: 18px; height: 28px; pointer-events: none; }
.tooltip { position: absolute; left: 48px; top: 248px; padding: 4px 3px 4px 4px; border: 1px solid #8f9ba6; border-radius: 3px; background: linear-gradient(#fff, #d8e1ea); color: #000; font: 14px/16px "Liberation Sans", sans-serif; white-space: nowrap; }

.status { display: flex; align-items: center; height: 45px; flex: none; padding-top: 2px; background: #dcdcdc; font-size: 10px; font-weight: 500; color: #000; }
.coords { width: 253px; flex: none; height: 40px; padding-left: 2px; display: flex; flex-direction: column; justify-content: space-between; line-height: 20px; }
.polar { border-left: 1px solid #888; }
.hint { display: flex; align-items: center; flex: 434; gap: 19px; }
.selection { display: flex; align-items: center; flex: 329; gap: 3px; }
.last { flex: 231; }
.dot { display: block; width: 6px; height: 6px; border-radius: 50%; background: #c6c6c6; }
.mouse { width: 18px; height: 30px; }
```
FILE: rulers.js
```js
const STEP = 22.5;
const X0 = 38;
const ZERO_Y = 397;

function drawRulers() {
  const rx = document.getElementById('rulerX');
  const ry = document.getElementById('rulerY');
  const w = rx.clientWidth || rx.getBoundingClientRect().width;
  const h = ry.clientHeight || ry.getBoundingClientRect().height;
  let xs = '', ys = '', dots = '', axes = '';

  for (let i = 0; i * STEP < w; i++) {
    const x = Math.floor(i * STEP);
    xs += `<path d="M${x + 0.5} 16v7"/><text x="${x}" y="9" text-anchor="middle">${X0 + i}</text>`;
    if ((X0 + i) % 10 === 0) axes += `M${x + 0.5} 0V${h}`;
  }
  const top = Math.floor(ZERO_Y / STEP);
  for (let v = top; ZERO_Y - v * STEP < h + 1; v--) {
    const y = Math.floor(ZERO_Y - v * STEP);
    ys += `<path d="M16 ${y + 0.5}h7"/><text transform="translate(9 ${y}) rotate(-90)" text-anchor="middle">${v}</text>`;
    if (v % 10 === 0) axes += `M0 ${y + 0.5}H${w}`;
    for (let i = 0; i * STEP < w; i++) dots += `M${Math.floor(i * STEP)} ${y + 0.5}h1`;
  }
  rx.innerHTML = xs + '<path d="M26 13h12l-6 6z" fill="#000" style="stroke:none"/>';
  ry.innerHTML = ys + '<path d="M13 322v12l7-6z" fill="#000" style="stroke:none"/>';
  document.getElementById('dots').setAttribute('d', dots);
  document.getElementById('axes').setAttribute('d', axes);
}

// Curve parallel to an ellipse, at distance d inside it.
function insetEllipse(cx, cy, a, b, d) {
  const pts = [];
  for (let k = 0; k < 120; k++) {
    const t = k * Math.PI / 60, c = Math.cos(t), s = Math.sin(t);
    const n = Math.hypot(b * c, a * s);
    pts.push((cx + a * c - d * b * c / n).toFixed(2) + ' ' + (cy + b * s - d * a * s / n).toFixed(2));
  }
  return 'M' + pts.join('L') + 'Z';
}

document.getElementById('innerEllipse').setAttribute('d', insetEllipse(815, 439.5, 36, 112.5, 11.25));
drawRulers();
window.addEventListener('resize', drawRulers);
```
